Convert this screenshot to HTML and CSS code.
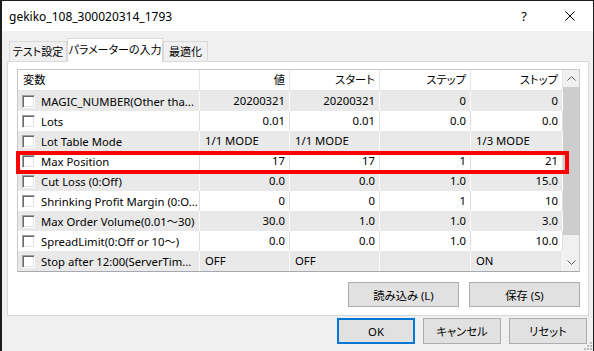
FILE: index.html
```html
<!DOCTYPE html>
<html>
<head>
  <title>gekiko_108_300020314_1793</title>
  <link rel="stylesheet" href="styles.css">
</head>
<body>
  <div class="window">
    <div class="titlebar">
      <div class="title">gekiko_108_300020314_1793</div>
      <div class="title-btn help">?</div>
      <div class="title-btn">
        <svg width="10" height="10" viewBox="0 0 10 10"><path d="M0.5 0.5 L9.5 9.5 M9.5 0.5 L0.5 9.5" stroke="#000" stroke-width="1" fill="none"/></svg>
      </div>
    </div>

    <div class="content">
      <div class="tabs">
        <div class="tab tab-test">テスト設定</div>
        <div class="tab tab-param active">パラメーターの入力</div>
        <div class="tab tab-opt">最適化</div>
      </div>

      <div class="panel">
        <div class="list">
          <div class="grid">
            <div class="row head">
              <div class="cell">変数</div>
              <div class="cell num">値</div>
              <div class="cell num">スタート</div>
              <div class="cell num">ステップ</div>
              <div class="cell num">ストップ</div>
            </div>
            <div class="row odd">
              <div class="cell name"><span class="cb"></span>MAGIC_NUMBER(Other tha...</div>
              <div class="cell num">20200321</div>
              <div class="cell num">20200321</div>
              <div class="cell num">0</div>
              <div class="cell num">0</div>
            </div>
            <div class="row">
              <div class="cell name"><span class="cb"></span>Lots</div>
              <div class="cell num">0.01</div>
              <div class="cell num">0.01</div>
              <div class="cell num">0.0</div>
              <div class="cell num">0.0</div>
            </div>
            <div class="row odd">
              <div class="cell name"><span class="cb"></span>Lot Table Mode</div>
              <div class="cell">1/1 MODE</div>
              <div class="cell">1/1 MODE</div>
              <div class="cell"></div>
              <div class="cell">1/3 MODE</div>
            </div>
            <div class="row">
              <div class="cell name"><span class="cb"></span>Max Position</div>
              <div class="cell num">17</div>
              <div class="cell num">17</div>
              <div class="cell num">1</div>
              <div class="cell num">21</div>
            </div>
            <div class="row odd">
              <div class="cell name"><span class="cb"></span>Cut Loss (0:Off)</div>
              <div class="cell num">0.0</div>
              <div class="cell num">0.0</div>
              <div class="cell num">1.0</div>
              <div class="cell num">15.0</div>
            </div>
            <div class="row">
              <div class="cell name"><span class="cb"></span>Shrinking Profit Margin (0:O...</div>
              <div class="cell num">0</div>
              <div class="cell num">0</div>
              <div class="cell num">1</div>
              <div class="cell num">10</div>
            </div>
            <div class="row odd">
              <div class="cell name"><span class="cb"></span>Max Order Volume(0.01～30)</div>
              <div class="cell num">30.0</div>
              <div class="cell num">1.0</div>
              <div class="cell num">1.0</div>
              <div class="cell num">3.0</div>
            </div>
            <div class="row">
              <div class="cell name"><span class="cb"></span>SpreadLimit(0:Off or 10～)</div>
              <div class="cell num">0.0</div>
              <div class="cell num">0.0</div>
              <div class="cell num">1.0</div>
              <div class="cell num">10.0</div>
            </div>
            <div class="row odd">
              <div class="cell name"><span class="cb"></span>Stop after 12:00(ServerTim...</div>
              <div class="cell">OFF</div>
              <div class="cell">OFF</div>
              <div class="cell"></div>
              <div class="cell">ON</div>
            </div>
          </div>

          <div class="scrollbar">
            <div class="arrow">
              <svg width="9" height="5" viewBox="0 0 9 5"><path d="M0.5 4.5 L4.5 0.5 L8.5 4.5" stroke="#606060" fill="none"/></svg>
            </div>
            <div class="thumb"></div>
            <div class="track"></div>
            <div class="arrow">
              <svg width="9" height="5" viewBox="0 0 9 5"><path d="M0.5 0.5 L4.5 4.5 L8.5 0.5" stroke="#606060" fill="none"/></svg>
            </div>
          </div>

          <div class="highlight"></div>
        </div>

        <div class="panel-buttons">
          <button class="btn wide">読み込み (L)</button>
          <button class="btn wide">保存 (S)</button>
        </div>
      </div>

      <div class="dialog-buttons">
        <button class="btn default">OK</button>
        <button class="btn">キャンセル</button>
        <button class="btn">リセット</button>
      </div>
    </div>

    <svg class="grip" width="8" height="8" viewBox="0 0 8 8">
      <rect x="6" y="0" width="2" height="2" fill="#bcbcbc"/>
      <rect x="3" y="3" width="2" height="2" fill="#bcbcbc"/>
      <rect x="6" y="3" width="2" height="2" fill="#bcbcbc"/>
      <rect x="0" y="6" width="2" height="2" fill="#bcbcbc"/>
      <rect x="3" y="6" width="2" height="2" fill="#bcbcbc"/>
      <rect x="6" y="6" width="2" height="2" fill="#bcbcbc"/>
    </svg>
  </div>
</body>
</html>
```

FILE: styles.css
```css
* {
  box-sizing: border-box;
}
body {
  margin: 0;
  background-color: #1c1c1c;
  font-family: "Noto Sans", "Noto Sans CJK JP", sans-serif;
  font-size: 11.3px;
  color: #000;
  font-feature-settings: "palt";
}
.window {
  position: relative;
  margin: 1px 1px 0 2px;
  height: 350px;
  background-color: #f0f0f0;
}
.titlebar {
  display: flex;
  align-items: center;
  height: 30px;
  font-size: 12px;
  background-color: #fff;
}
.title {
  flex: 1;
  padding-left: 7px;
}
.title-btn {
  display: flex;
  align-items: center;
  justify-content: center;
  width: 46px;
  height: 30px;
}
.help {
  font-size: 13px;
}
.content {
  padding: 7px 4px 0 5px;
}
.tabs {
  display: flex;
  align-items: flex-end;
  height: 23px;
  margin-left: 2px;
}
.tab {
  height: 20px;
  line-height: 19px;
  font-size: 11px;
  text-align: center;
  white-space: nowrap;
  border: 1px solid #d9d9d9;
  border-bottom: none;
  background-color: #f0f0f0;
}
.tab-test {
  width: 58px;
}
.tab-param {
  width: 96px;
}
.tab-opt {
  width: 45px;
}
.tab.active {
  position: relative;
  z-index: 1;
  height: 24px;
  line-height: 22px;
  margin-bottom: -1px;
  background-color: #fff;
}
.panel {
  height: 255px;
  padding: 7px 7px 0 9px;
  background-color: #fff;
  border: 1px solid #d9d9d9;
}
.list {
  position: relative;
  display: flex;
  width: 563px;
  height: 203px;
  border: 1px solid #c9c9c9;
  border-bottom-color: #a8a8b0;
}
.grid {
  width: 545px;
}
.row {
  display: grid;
  grid-template-columns: 182px 90px 90px 91px 92px;
  height: 20px;
  background-color: #fff;
}
.row.head {
  height: 21px;
  border-bottom: 1px solid #e5e5e5;
}
.row.odd {
  background-color: #e9e9e9;
}
.cell {
  padding: 0 4px 0 5px;
  line-height: 19px;
  white-space: nowrap;
  overflow: hidden;
  border-right: 1px solid #dedede;
}
.row.odd .cell {
  border-right-color: #fbfbfb;
}
.head .cell {
  border-right-color: #e5e5e5;
}
.num {
  text-align: right;
}
.name {
  display: flex;
  align-items: center;
  padding-left: 4px;
}
.cb {
  flex: none;
  width: 13px;
  height: 13px;
  margin-right: 6px;
  background-color: #fff;
  border: 1px solid;
  border-color: #a0a0a0 #fff #fff #a0a0a0;
  box-shadow: inset 1px 1px #696969, inset -1px -1px #e3e3e3;
}
.scrollbar {
  display: flex;
  flex-direction: column;
  width: 17px;
  background-color: #f0f0f0;
}
.arrow {
  display: flex;
  align-items: center;
  justify-content: center;
  height: 17px;
}
.thumb {
  height: 148px;
  background-color: #cdcdcd;
}
.track {
  flex: 1;
}
.highlight {
  position: absolute;
  left: -2px;
  top: 81px;
  width: 553px;
  height: 23px;
  border: 4px solid #f00;
}
.panel-buttons {
  display: flex;
  justify-content: flex-end;
  gap: 10px;
  width: 563px;
  margin-top: 10px;
}
.btn {
  width: 78px;
  height: 25px;
  padding: 0;
  font-family: inherit;
  font-size: 11.3px;
  font-feature-settings: "palt";
  background-color: #e1e1e1;
  border: 1px solid #adadad;
}
.btn.wide {
  width: 111px;
}
.btn.default {
  border-color: #0078d7;
  box-shadow: inset 0 0 0 1px #0078d7;
}
.dialog-buttons {
  display: flex;
  justify-content: flex-end;
  gap: 8px;
  margin-top: 2px;
  padding-right: 2px;
}
.dialog-buttons .btn {
  height: 26px;
}
.grip {
  position: absolute;
  right: 1px;
  bottom: 1px;
}
```
